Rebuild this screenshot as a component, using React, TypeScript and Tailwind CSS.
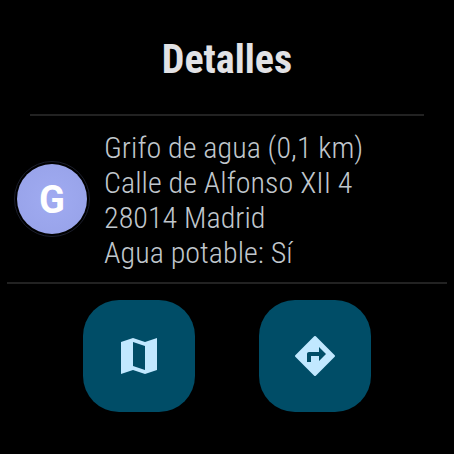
import React from 'react';

const lines = [
  'Grifo de agua (0,1 km)',
  'Calle de Alfonso XII 4',
  '28014 Madrid',
  'Agua potable: Sí',
];

const MapIcon = () => (
  <svg viewBox="0 0 24 24" className="h-12 w-12 fill-current">
    <path d="M15 5 9 3 3 5v16l6-2 6 2 6-2V3l-6 2zm0 14-6-2V5l6 2v12z" />
  </svg>
);

const DirectionsIcon = () => (
  <svg viewBox="0 0 24 24" className="h-12 w-12 fill-current">
    <path d="M21.85 11.6 12.4 2.15a.57.57 0 0 0-.8 0L2.15 11.6a.57.57 0 0 0 0 .8l9.45 9.45a.57.57 0 0 0 .8 0l9.45-9.45a.57.57 0 0 0 0-.8zM14 14.5V12h-4v3H8v-4c0-.55.45-1 1-1h5V7.5l3.5 3.5-3.5 3.5z" />
  </svg>
);

const ActionButton = ({
  label,
  children,
}: {
  label: string;
  children: React.ReactNode;
}) => (
  <button
    aria-label={label}
    className="flex h-28 w-28 items-center justify-center rounded-[36px] bg-[#004d67] text-[#c1e8ff]"
  >
    {children}
  </button>
);

export default function App() {
  return (
    <div className="flex h-[454px] w-[454px] flex-col overflow-hidden bg-black font-['Roboto_Condensed',Roboto,sans-serif]">
      <header className="flex h-[114px] items-center justify-center pt-1.5">
        <h1 className="text-[40px] leading-[48px] font-bold whitespace-nowrap text-[#e2e2e5] [font-stretch:75%]">
          Detalles
        </h1>
      </header>
      <hr className="mx-[30px] border-t-2 border-[#222]" />

      <section className="flex h-[166px] items-center pl-[14px]">
        <div className="flex h-[76px] w-[76px] shrink-0 items-center justify-center rounded-full border border-[#1b1e2c] p-[2px]">
          <div className="flex h-full w-full items-center justify-center rounded-full bg-radial from-[#a0abf1] to-[#96a1e8] pt-0.5 font-[Roboto,sans-serif] text-[38px] leading-none font-bold text-white">
            G
          </div>
        </div>
        <div className="mt-0.5 ml-[14px] text-[30px] leading-[35px] font-light tracking-[0.05px] whitespace-nowrap text-[#c0c7cd] [font-stretch:75%]">
          {lines.map((line) => (
            <p key={line}>{line}</p>
          ))}
        </div>
      </section>
      <hr className="mx-[7px] border-t-2 border-[#222]" />

      <div className="flex justify-center gap-16 pt-4">
        <ActionButton label="Mapa">
          <MapIcon />
        </ActionButton>
        <ActionButton label="Cómo llegar">
          <DirectionsIcon />
        </ActionButton>
      </div>
    </div>
  );
}
